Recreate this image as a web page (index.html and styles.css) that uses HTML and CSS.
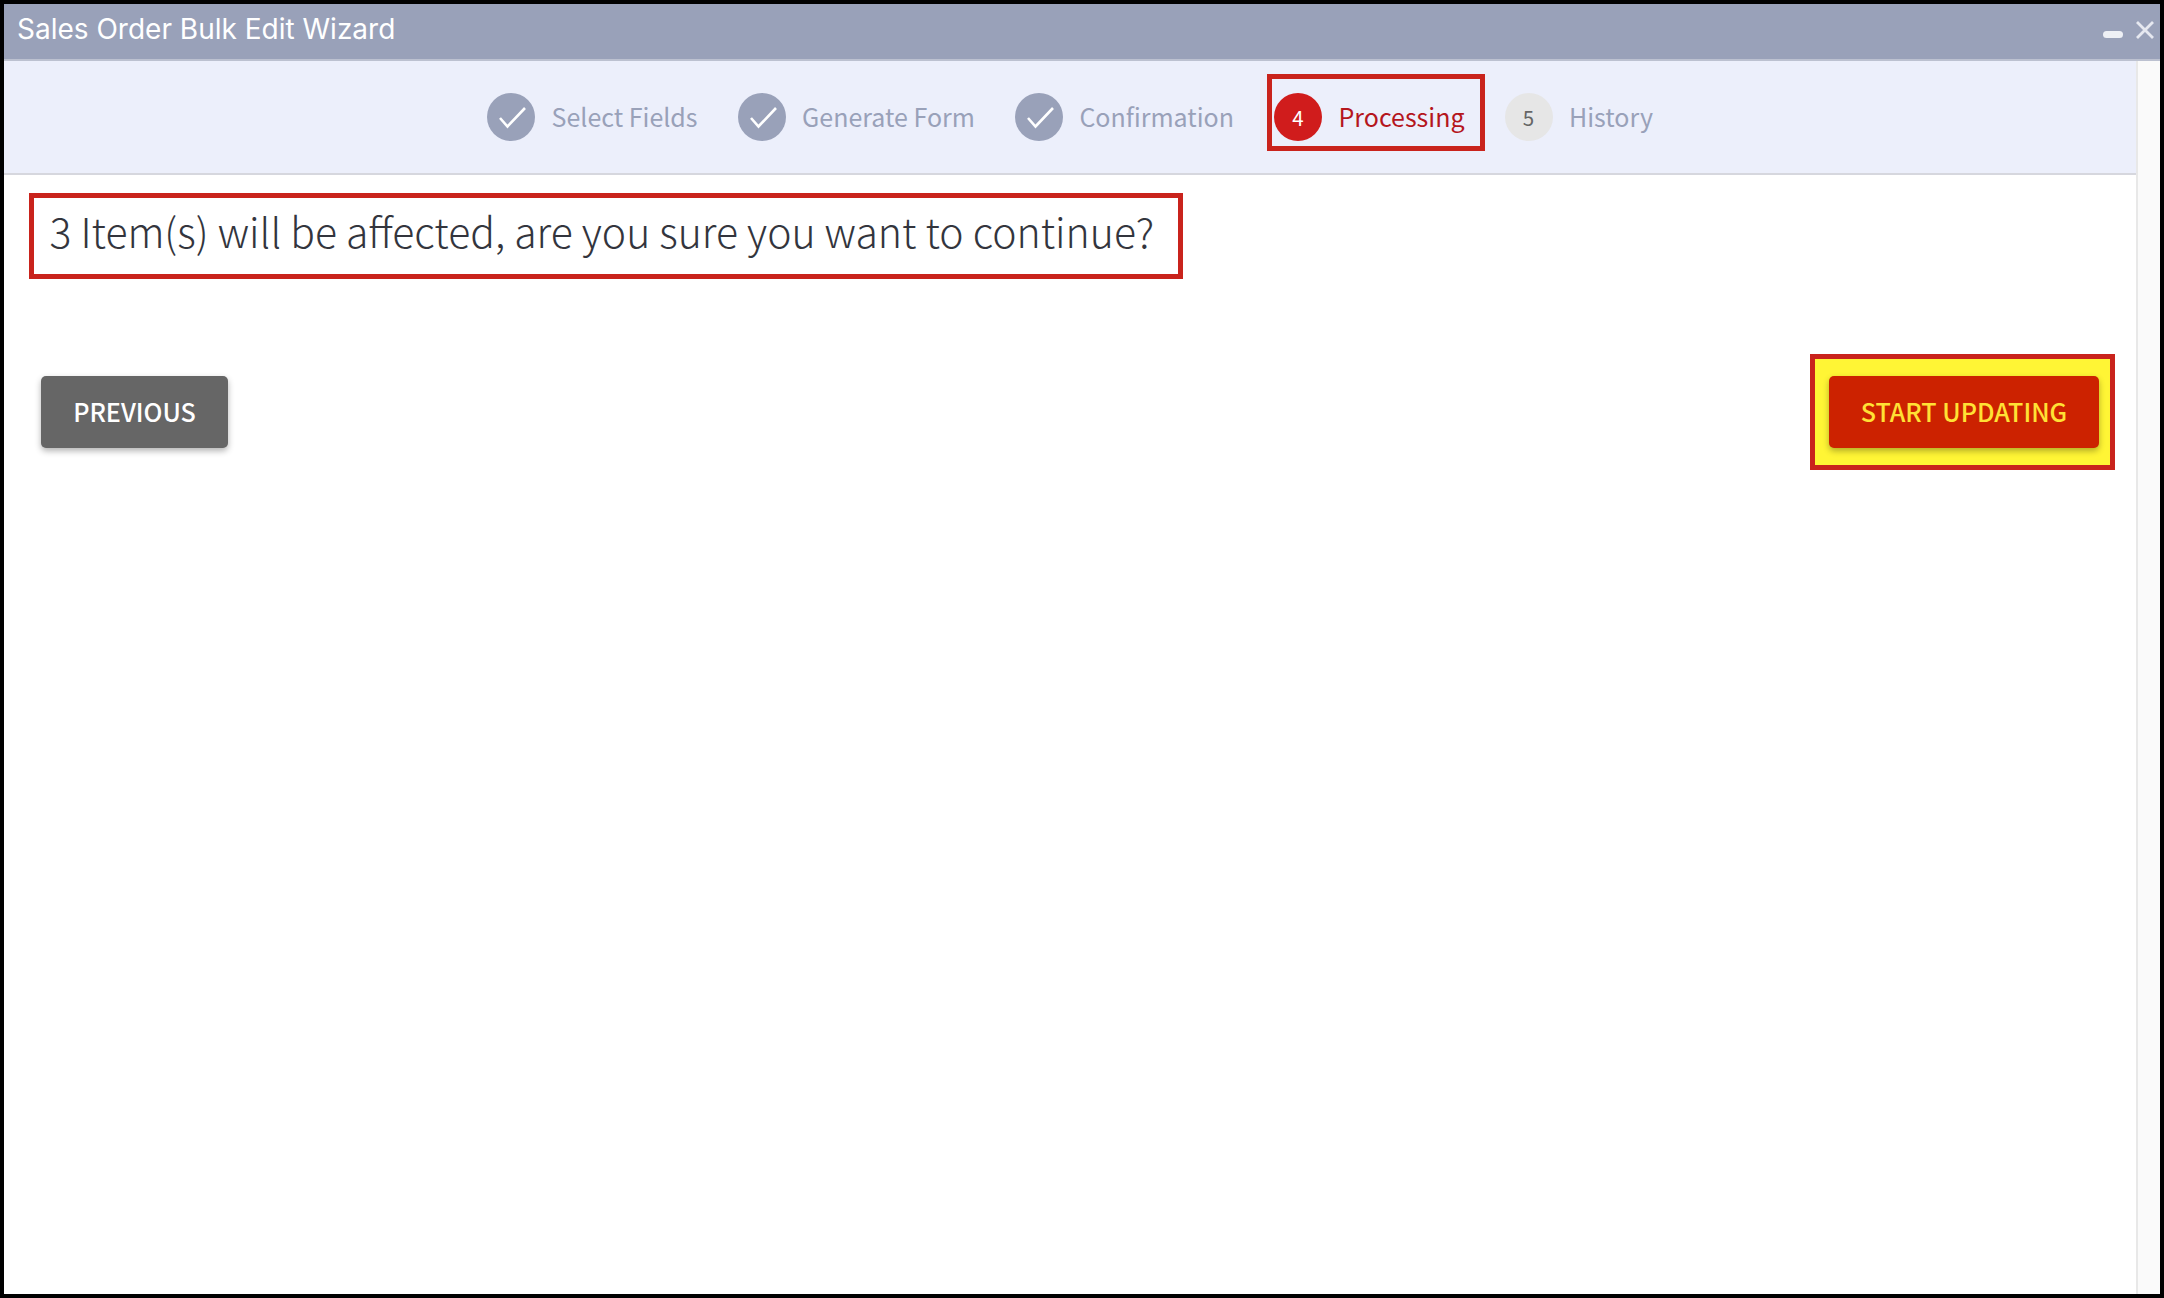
FILE: index.html
```html
<!DOCTYPE html>
<html lang="en">
<head>
<meta charset="utf-8">
<title>Sales Order Bulk Edit Wizard</title>
<link rel="stylesheet" href="styles.css">
</head>
<body>
<div class="window">
  <header class="titlebar">
    <span class="title">Sales Order Bulk Edit Wizard</span>
    <div class="window-controls">
      <span class="minimize"></span>
      <svg class="close" viewBox="0 0 18 18" width="18" height="18"><path d="M1 1 17 17M17 1 1 17" fill="none" stroke="#e6e8f0" stroke-width="2.8"/></svg>
    </div>
  </header>
  <div class="body">
    <main class="content">
      <nav class="stepper">
        <div class="step">
          <span class="badge done"><svg viewBox="0 0 48 48" width="48" height="48"><path d="M13 25 20.5 33.5 38 15" fill="none" stroke="#fff" stroke-width="2.6"/></svg></span>
          <span class="step-label">Select Fields</span>
        </div>
        <div class="step">
          <span class="badge done"><svg viewBox="0 0 48 48" width="48" height="48"><path d="M13 25 20.5 33.5 38 15" fill="none" stroke="#fff" stroke-width="2.6"/></svg></span>
          <span class="step-label">Generate Form</span>
        </div>
        <div class="step">
          <span class="badge done"><svg viewBox="0 0 48 48" width="48" height="48"><path d="M13 25 20.5 33.5 38 15" fill="none" stroke="#fff" stroke-width="2.6"/></svg></span>
          <span class="step-label">Confirmation</span>
        </div>
        <div class="step current">
          <span class="badge active">4</span>
          <span class="step-label">Processing</span>
        </div>
        <div class="step">
          <span class="badge pending">5</span>
          <span class="step-label">History</span>
        </div>
      </nav>
      <div class="message">3 Item(s) will be affected, are you sure you want to continue?</div>
      <div class="actions">
        <button class="btn btn-previous" type="button">PREVIOUS</button>
        <div class="highlight">
          <button class="btn btn-start" type="button">START UPDATING</button>
        </div>
      </div>
    </main>
    <aside class="scrollbar"></aside>
  </div>
</div>
</body>
</html>
```

FILE: styles.css
```css
* { box-sizing: border-box; }

html, body {
  margin: 0;
  height: 100%;
}

body {
  background: #000;
  padding: 4px;
  font-family: "Noto Sans CJK SC", "Noto Sans", sans-serif;
}

.window {
  height: 100%;
  display: flex;
  flex-direction: column;
  background: #fff;
}

.titlebar {
  height: 57px;
  flex: none;
  display: flex;
  align-items: flex-start;
  justify-content: space-between;
  background: #99a1b9;
  border-bottom: 2px solid #bcc1d0;
  padding: 0 6px 0 13px;
}

.title {
  font-family: Inter, "Liberation Sans", sans-serif;
  font-size: 28px;
  line-height: 37px;
  margin-top: 7px;
  color: #fff;
}

.window-controls {
  display: flex;
  align-items: flex-start;
  gap: 13px;
  margin-top: 17px;
}

.minimize {
  width: 20px;
  height: 7px;
  margin-top: 10px;
  border-radius: 4px;
  background: #eef0f5;
}

.body {
  flex: 1;
  display: flex;
  min-height: 0;
}

.content {
  flex: 1;
  min-width: 0;
}

.scrollbar {
  width: 24px;
  flex: none;
  background: #fafafa;
  border-left: 2px solid #e8e8e8;
}

.stepper {
  height: 114px;
  display: flex;
  align-items: center;
  justify-content: center;
  gap: 40px;
  background: #eceffb;
  border-bottom: 2px solid #d6d7de;
}

.step {
  position: relative;
  display: flex;
  align-items: center;
  gap: 16.5px;
}

.current::after {
  content: "";
  position: absolute;
  inset: -19px -20px -10px -7px;
  border: 5px solid #c9231c;
}

.badge {
  width: 48px;
  height: 48px;
  border-radius: 50%;
  display: flex;
  align-items: center;
  justify-content: center;
  font-size: 20.5px;
}

.done { background: #99a1b9; }
.active { background: #d01c1c; color: #fff; }
.pending { background: #e6e6e6; color: #666; }

.step-label {
  font-size: 25px;
  line-height: 40px;
  padding-bottom: 2px;
  color: #99a1b9;
}

.current .step-label { color: #b5161d; }

.message {
  margin: 18px 0 0 25px;
  width: 1154px;
  height: 86px;
  padding: 0 0 12px 15.5px;
  display: flex;
  align-items: center;
  border: 5px solid #c9231c;
  font-size: 40.9px;
  font-weight: 300;
  color: #33353d;
  white-space: nowrap;
}

.actions {
  margin-top: 75px;
  padding: 0 21px 0 37px;
  display: flex;
  justify-content: space-between;
  align-items: flex-start;
}

.highlight {
  padding: 17px 11px 17px 14px;
  background: #fff535;
  border: 5px solid #c9231c;
}

.btn {
  display: block;
  height: 72px;
  padding: 0 0 2px;
  border: 0;
  border-radius: 5px;
  font-family: inherit;
  font-size: 25.1px;
  font-weight: 500;
  box-shadow: 0 3px 6px rgba(0, 0, 0, 0.3);
}

.btn-previous {
  width: 187px;
  margin-top: 22px;
  background: #666;
  color: #fff;
}

.btn-start {
  width: 270px;
  background: #cc2200;
  color: #ffe135;
}
```
